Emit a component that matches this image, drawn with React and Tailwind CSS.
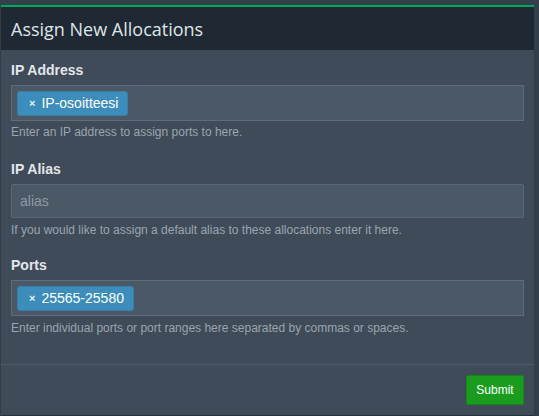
export default function App() {
  const Tag = ({ children }) => (
    <span className="inline-flex items-center h-[25px] pl-[11px] pr-[9px] rounded-[3px] bg-[#3c8dbc] border border-[#367fa9] text-white text-[14px] leading-none">
      <span className="text-[11px] font-bold mr-[6px] text-[#e8f1f8]">×</span>
      {children}
    </span>
  );
  return (
    <div className="w-[539px] h-[416px] bg-[#343f4c] pt-[5px] pl-[1px]" style={{ fontFamily: '"Liberation Sans", Arial, sans-serif' }}>
      <div className="w-[533px] h-[410px] bg-[#3f4b58] border-t-[2px] border-[#00a65a] flex flex-col shadow-[0_1px_1px_rgba(0,0,0,0.2)]">
        <div className="h-[43px] shrink-0 bg-[#1f2933] flex items-center px-[10px]">
          <h3 className="text-[18px] leading-[24px] text-[#dfe4ea]" style={{ fontFamily: '"Open Sans", sans-serif' }}>Assign New Allocations</h3>
        </div>
        <div className="px-[10px] pt-[10px] flex-1">
          <div className="text-[14px] leading-[20px] font-bold text-[#e3e7ec] mb-[5px]">IP Address</div>
          <div className="h-[36px] w-[513px] bg-[#4b5866] border border-[#5f6c79] flex items-center px-[5px]">
            <Tag>IP-osoitteesi</Tag>
          </div>
          <div className="text-[12px] leading-[17px] text-[#9aa5b1] mt-[3px]">Enter an IP address to assign ports to here.</div>

          <div className="text-[14px] leading-[20px] font-bold text-[#e3e7ec] mt-[18px] mb-[5px]">IP Alias</div>
          <div className="h-[34px] w-[513px] bg-[#4b5866] border border-[#5a6774] rounded-[2px] flex items-center px-[8px] text-[14px] text-[#8e99a5]">alias</div>
          <div className="text-[12px] leading-[17px] text-[#9aa5b1] mt-[4px]">If you would like to assign a default alias to these allocations enter it here.</div>

          <div className="text-[14px] leading-[20px] font-bold text-[#e3e7ec] mt-[16px] mb-[5px]">Ports</div>
          <div className="h-[36px] w-[513px] bg-[#4b5866] border border-[#5f6c79] flex items-center px-[5px]">
            <Tag>25565-25580</Tag>
          </div>
          <div className="text-[12px] leading-[17px] text-[#9aa5b1] mt-[4px]">Enter individual ports or port ranges here separated by commas or spaces.</div>
        </div>
        <div className="h-[51px] shrink-0 border-t border-[#4e5b68] flex items-start pt-[10px] justify-end px-[10px]">
          <button className="h-[30px] w-[58px] flex items-center justify-center bg-[#1a9c1f] border border-[#14861a] rounded-[2px] text-white text-[12px]">Submit</button>
        </div>
      </div>
    </div>
  );
}
